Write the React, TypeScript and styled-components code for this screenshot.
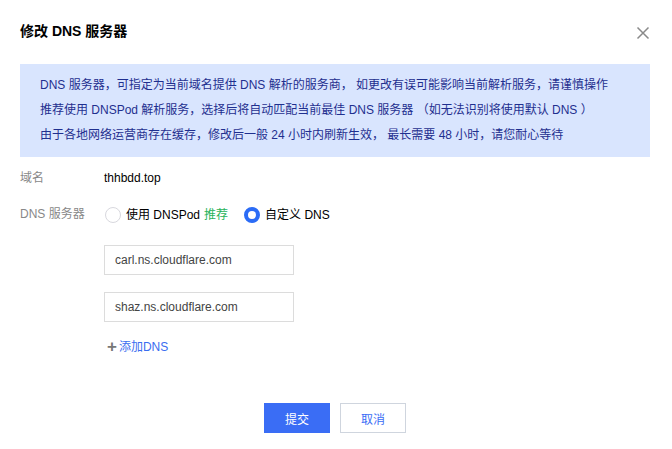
import React, { FC, useState } from "react";
import styled, { createGlobalStyle } from "styled-components";

const GlobalStyle = createGlobalStyle`
  html, body {
    margin: 0;
    padding: 0;
    background: #fff;
  }
  body {
    font-family: "Liberation Sans", Arial, "Noto Sans CJK SC", sans-serif;
    font-size: 12px;
    color: #000;
  }
`;

const Dialog = styled.div`
  width: 672px;
  height: 449px;
  box-sizing: border-box;
  padding: 20px 22px 0 20px;
  display: flex;
  flex-flow: column;
`;

const Header = styled.div`
  display: flex;
  align-items: center;
  justify-content: space-between;
  height: 22px;
`;

const Title = styled.div`
  font-size: 14px;
  font-weight: 700;
  line-height: 22px;
  color: #000;
`;

const CloseButton = styled.button`
  border: none;
  background: none;
  padding: 0;
  width: 14px;
  height: 14px;
  margin-top: 4px;
  cursor: pointer;
  display: flex;
`;

const Banner = styled.div`
  margin-top: 22px;
  background: #d9e5fe;
  color: #1f2f8f;
  padding: 9px 20px;
  line-height: 25px;
  font-size: 12px;
`;

const Form = styled.div`
  margin-top: 11px;
  display: flex;
  flex-flow: column;
`;

const Row = styled.div<{ top?: number }>`
  display: flex;
  align-items: flex-start;
  margin-top: ${({ top }) => top ?? 0}px;
`;

const Label = styled.div`
  width: 84px;
  flex-shrink: 0;
  color: #888;
  line-height: 20px;
`;

const Value = styled.div`
  color: #000;
  line-height: 20px;
  display: flex;
  flex-flow: column;
`;

const Radios = styled.div`
  display: flex;
  align-items: center;
  height: 20px;
  margin-top: 1px;
`;

const RadioItem = styled.label`
  display: flex;
  align-items: center;
  margin-right: 15px;
  cursor: pointer;
  color: #000;
`;

const RadioDot = styled.span<{ checked?: boolean }>`
  width: 16px;
  height: 16px;
  box-sizing: border-box;
  border-radius: 50%;
  border: ${({ checked }) =>
    checked ? "4px solid #2b6cf6" : "1px solid #d8d8de"};
  background: #fff;
  margin: 0 5px 0 1px;
`;

const Green = styled.span`
  color: #29b35b;
  margin-left: 4px;
`;

const Inputs = styled.div`
  display: flex;
  flex-flow: column;
  gap: 17px;
  margin-top: 20px;
`;

const Input = styled.input`
  width: 190px;
  height: 30px;
  box-sizing: border-box;
  border: 1px solid #dcdcdc;
  padding: 0 10px;
  font-family: "Liberation Sans", Arial, sans-serif;
  font-size: 12px;
  color: #444;
  outline: none;
`;

const AddLink = styled.a`
  display: flex;
  align-items: center;
  margin-top: 15px;
  margin-left: 3px;
  color: #3a6df0;
  cursor: pointer;
  line-height: 20px;
`;

const Plus = styled.span`
  color: #777;
  font-size: 17px;
  font-weight: 700;
  margin-right: 2px;
  line-height: 20px;
`;

const Footer = styled.div`
  display: flex;
  justify-content: center;
  gap: 10px;
  margin-top: 46px;
`;

const Button = styled.button<{ primary?: boolean }>`
  width: 66px;
  height: 30px;
  box-sizing: border-box;
  font-family: "Liberation Sans", Arial, "Noto Sans CJK SC", sans-serif;
  font-size: 12px;
  cursor: pointer;
  border: 1px solid ${({ primary }) => (primary ? "#3a6df5" : "#cfd5de")};
  background: ${({ primary }) => (primary ? "#3a6df5" : "#fff")};
  color: ${({ primary }) => (primary ? "#fff" : "#3a6df5")};
`;

const tips = [
  "DNS 服务器，可指定为当前域名提供 DNS 解析的服务商， 如更改有误可能影响当前解析服务，请谨慎操作",
  "推荐使用 DNSPod 解析服务，选择后将自动匹配当前最佳 DNS 服务器 （如无法识别将使用默认 DNS ）",
  "由于各地网络运营商存在缓存，修改后一般 24 小时内刷新生效， 最长需要 48 小时，请您耐心等待",
];

const App: FC = () => {
  const [mode, setMode] = useState("custom");
  const [servers, setServers] = useState([
    "carl.ns.cloudflare.com",
    "shaz.ns.cloudflare.com",
  ]);

  return (
    <Dialog>
      <GlobalStyle />
      <Header>
        <Title>修改 DNS 服务器</Title>
        <CloseButton aria-label="关闭">
          <svg width="14" height="14" viewBox="0 0 14 14">
            <path
              d="M1.5 1.5 L12.5 12.5 M12.5 1.5 L1.5 12.5"
              stroke="#8a8a8a"
              strokeWidth="1.5"
              fill="none"
            />
          </svg>
        </CloseButton>
      </Header>

      <Banner>
        {tips.map((t, i) => (
          <div key={i}>{t}</div>
        ))}
      </Banner>

      <Form>
        <Row>
          <Label>域名</Label>
          <Value>thhbdd.top</Value>
        </Row>
        <Row top={16}>
          <Label>DNS 服务器</Label>
          <Value>
            <Radios>
              <RadioItem onClick={() => setMode("dnspod")}>
                <RadioDot checked={mode === "dnspod"} />
                使用 DNSPod<Green>推荐</Green>
              </RadioItem>
              <RadioItem onClick={() => setMode("custom")}>
                <RadioDot checked={mode === "custom"} />
                自定义 DNS
              </RadioItem>
            </Radios>
            <Inputs>
              {servers.map((s, i) => (
                <Input
                  key={i}
                  value={s}
                  onChange={(e) =>
                    setServers(
                      servers.map((v, j) => (j === i ? e.target.value : v)),
                    )
                  }
                />
              ))}
            </Inputs>
            <AddLink onClick={() => setServers([...servers, ""])}>
              <Plus>+</Plus>添加DNS
            </AddLink>
          </Value>
        </Row>
      </Form>

      <Footer>
        <Button primary>提交</Button>
        <Button>取消</Button>
      </Footer>
    </Dialog>
  );
};

export default App;
